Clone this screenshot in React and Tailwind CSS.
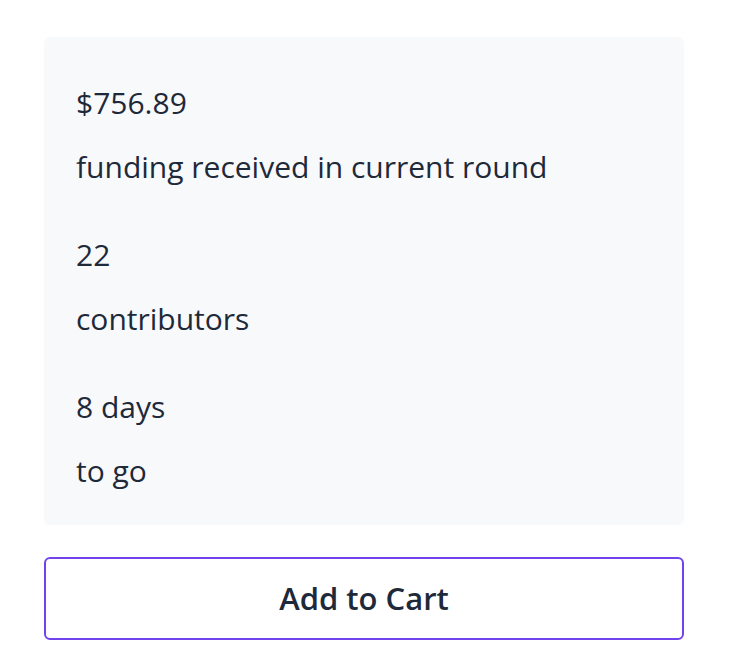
export default function App() {
  const stats = [
    { value: "$756.89", label: "funding received in current round" },
    { value: "22", label: "contributors" },
    { value: "8 days", label: "to go" },
  ]

  return (
    <div className="min-h-screen bg-white px-[44px] pt-[37px] font-['Open_Sans',sans-serif] text-gray-800">
      {/* Stats card */}
      <div className="flex w-[640px] flex-col gap-[44px] rounded-md bg-[#f8f9fb] px-8 pt-[44px] pb-8">
        {stats.map((s) => (
          <div key={s.label} className="flex flex-col gap-5">
            <p className="text-[30px] leading-[44px]">{s.value}</p>
            <p className="text-[30px] leading-[44px]">{s.label}</p>
          </div>
        ))}
      </div>

      {/* Button */}
      <button className="mt-8 h-[83px] w-[640px] rounded-md border-2 border-[#7043ec] bg-white text-[31px] font-semibold text-gray-800">
        Add to Cart
      </button>
    </div>
  )
}
